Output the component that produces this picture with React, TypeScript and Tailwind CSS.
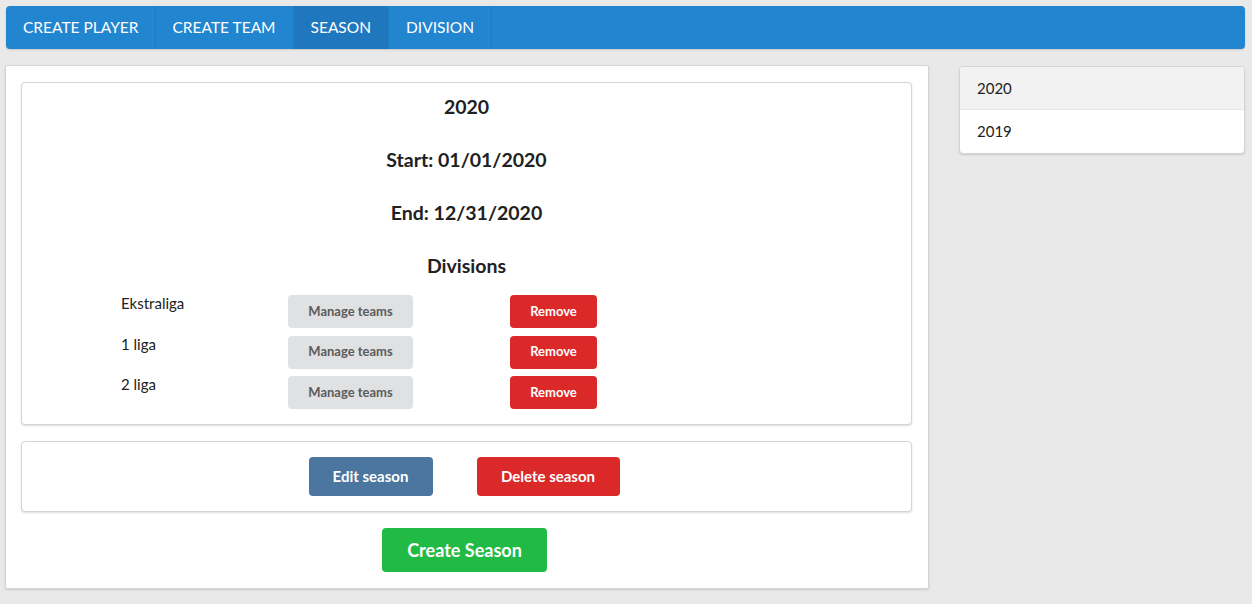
import React from "react";

const navItems = ["CREATE PLAYER", "CREATE TEAM", "SEASON", "DIVISION"];
const divisions = ["Ekstraliga", "1 liga", "2 liga"];
const seasons = ["2020", "2019"];

function Navbar() {
  return (
    <div className="flex h-[43px] rounded-[4px] bg-[#2185d0] shadow-[0_1px_2px_rgba(34,36,38,0.15)]">
      {navItems.map((item, i) => (
        <div
          key={item}
          className={
            "flex items-center px-[17px] text-[15.5px] text-white border-r border-[#1f7cc2] " +
            (i === 0 ? "rounded-l-[4px] pr-[16px] " : "") +
            (item === "SEASON" ? "bg-[#1f78bd]" : "")
          }
        >
          {item}
        </div>
      ))}
    </div>
  );
}

function SeasonCard() {
  return (
    <div className="rounded-[4px] border border-[#d4d4d5] bg-white shadow-[0_1px_2px_rgba(34,36,38,0.15)] pt-[10px] pb-[15px]">
      <div className="flex flex-col items-center gap-[25px] text-[19.5px] font-bold leading-[28px] text-[#212121]">
        <h3>2020</h3>
        <h3>Start: 01/01/2020</h3>
        <h3>End: 12/31/2020</h3>
        <h3>Divisions</h3>
      </div>

      {/* division rows */}
      <div className="mt-[15px] flex flex-col gap-[7.5px] pl-[99px]">
        {divisions.map((d) => (
          <div key={d} className="flex items-start">
            <div className="w-[167px] -mt-[2px] text-[15px] leading-[20px] text-[#212121]">{d}</div>
            <button className="h-[33px] w-[125px] rounded-[4px] bg-[#e0e1e2] text-[13px] font-bold text-[#5c5c5c]">
              Manage teams
            </button>
            <div className="w-[97px]" />
            <button className="h-[33px] w-[87px] rounded-[4px] bg-[#db2828] text-[13px] font-bold text-white">
              Remove
            </button>
          </div>
        ))}
      </div>
    </div>
  );
}

export default function App() {
  return (
    <div
      className="min-h-[604px] bg-[#e9e9e9] p-[6px] pr-[7px]"
      style={{ fontFamily: "Lato, 'Helvetica Neue', Arial, sans-serif" }}
    >
      <Navbar />

      <div className="mt-[16px] flex items-start">
        {/* main column */}
        <div className="-ml-[1px] w-[924px] border border-[#d4d4d5] rounded-[2px] bg-white p-[16px] pl-[15px] shadow-[0_1px_2px_rgba(34,36,38,0.15)]">
          <div className="w-[891px]">
            <SeasonCard />

            <div className="mt-[16px] flex justify-center gap-[44px] rounded-[4px] border border-[#d4d4d5] bg-white py-[15px] pr-[5px] shadow-[0_1px_2px_rgba(34,36,38,0.15)]">
              <button className="h-[39px] w-[124px] rounded-[4px] bg-[#4a76a0] text-[15px] font-bold text-white">
                Edit season
              </button>
              <button className="h-[39px] w-[143px] rounded-[4px] bg-[#db2828] text-[15px] font-bold text-white">
                Delete season
              </button>
            </div>

            <div className="mt-[16px] flex justify-center pr-[4px]">
              <button className="h-[44px] w-[165px] rounded-[4px] bg-[#21ba45] text-[18px] font-bold text-white">
                Create Season
              </button>
            </div>
          </div>
        </div>

        {/* seasons list */}
        <div className="ml-[30px] mt-[1px] w-[286px] overflow-hidden rounded-[4px] border border-[#d4d4d5] bg-white shadow-[0_1px_2px_rgba(34,36,38,0.15)]">
          {seasons.map((s, i) => (
            <div
              key={s}
              className={
                "flex h-[43px] items-center px-[17px] text-[15px] text-[#212121] " +
                (i === 0 ? "bg-[#f2f2f2] border-b border-[#e5e5e5]" : "")
              }
            >
              {s}
            </div>
          ))}
        </div>
      </div>
    </div>
  );
}
